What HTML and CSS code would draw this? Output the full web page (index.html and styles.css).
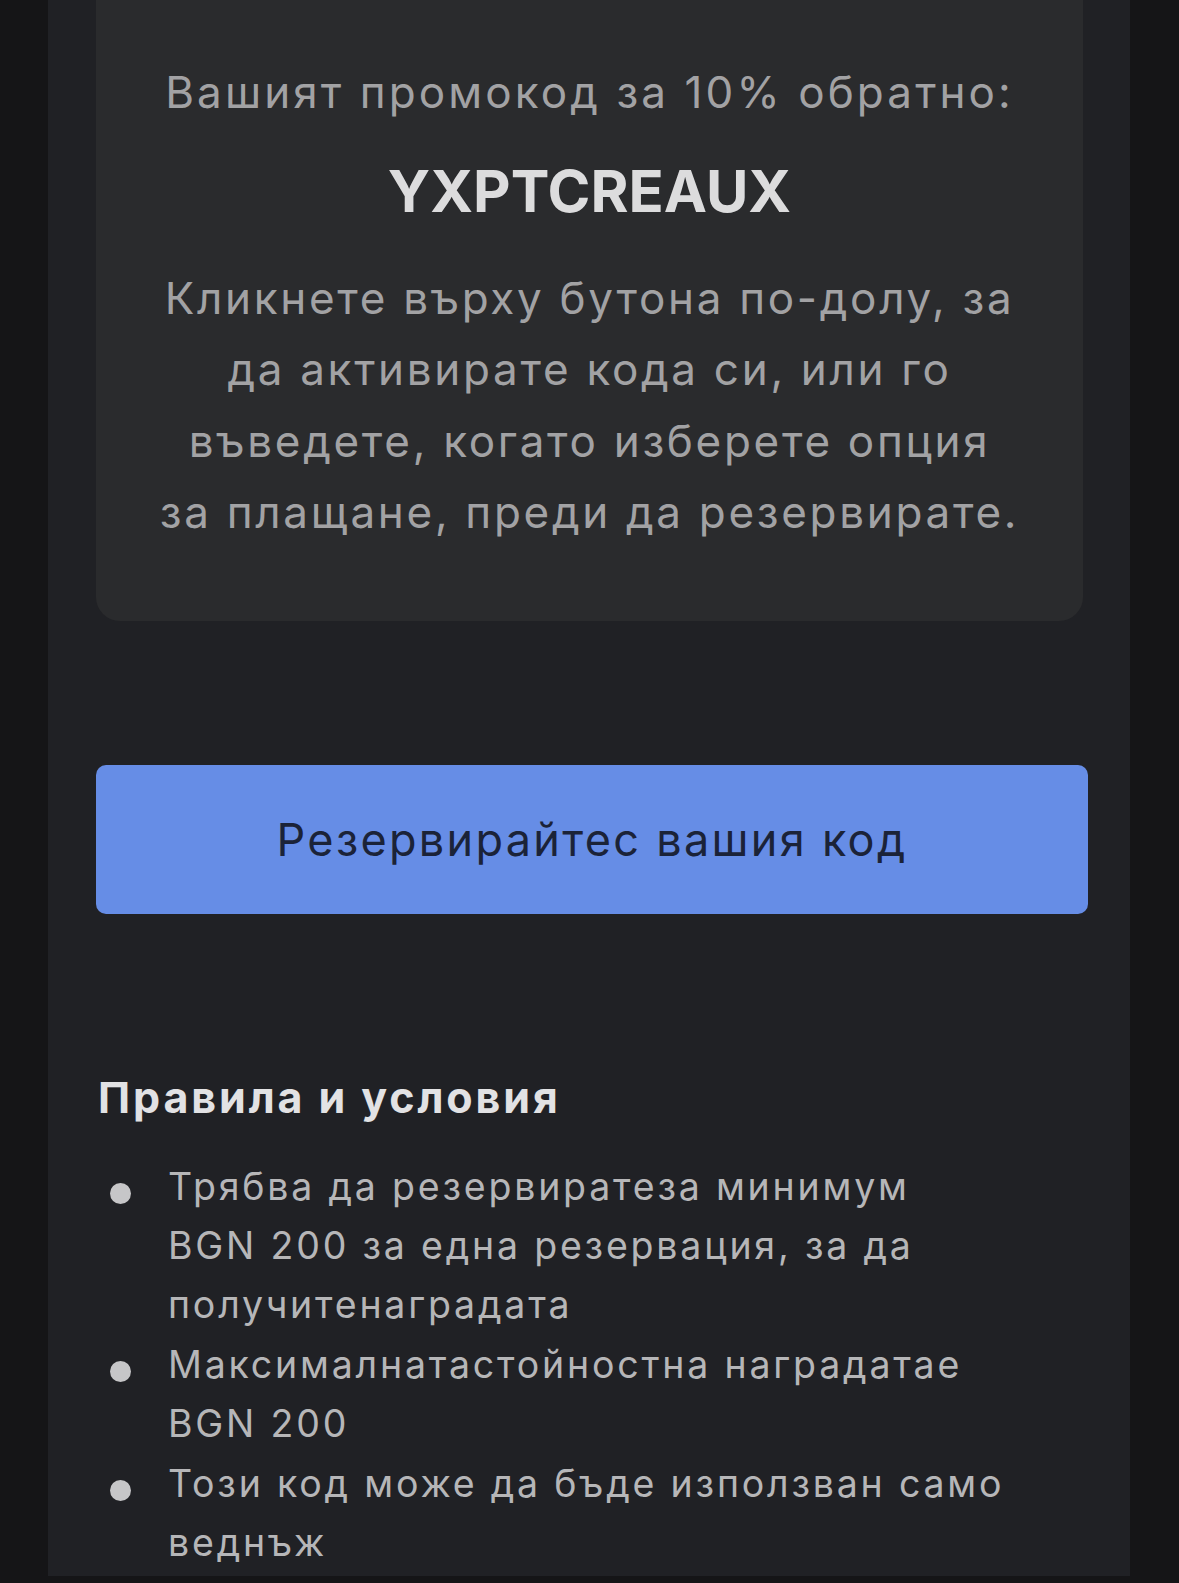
FILE: index.html
```html
<!DOCTYPE html>
<html lang="bg">
<head>
<meta charset="utf-8">
<title>Промокод</title>
<link rel="stylesheet" href="styles.css">
</head>
<body>
<main class="page">
  <section class="promo-card">
    <p class="promo-label">Вашият промокод за 10% обратно:</p>
    <p class="promo-code">YXPTCREAUX</p>
    <p class="promo-text">Кликнете върху бутона по-долу, за<br>да активирате кода си, или го<br>въведете, когато изберете опция<br>за плащане, преди да резервирате.</p>
  </section>

  <a class="book-btn" href="#">Резервирайтес вашия код</a>

  <section class="terms">
    <h2 class="terms-title">Правила и условия</h2>
    <ul class="terms-list">
      <li class="terms-item"><span class="bullet"></span><span class="item-text">Трябва да резервиратеза минимум<br>BGN 200 за една резервация, за да<br>получитенаградата</span></li>
      <li class="terms-item"><span class="bullet"></span><span class="item-text">Максималнатастойностна наградатае<br>BGN 200</span></li>
      <li class="terms-item"><span class="bullet"></span><span class="item-text">Този код може да бъде използван само<br>веднъж</span></li>
    </ul>
  </section>
</main>
</body>
</html>
```
FILE: styles.css
```css
html, body {
  margin: 0;
  padding: 0;
}

body {
  background: #151517;
  font-family: Inter, "Noto Sans", sans-serif;
  height: 1583px;
  overflow: hidden;
}

.page {
  margin-left: 48px;
  width: 1082px;
  box-sizing: border-box;
  background: #202125;
  padding: 0 0 4px 48px;
}

.promo-card {
  width: 987px;
  box-sizing: border-box;
  background: #2a2b2d;
  border-radius: 0 0 24px 24px;
  padding: 57px 20px 72px;
  text-align: center;
}

.promo-label {
  margin: 0 0 27px;
  font-size: 44px;
  line-height: 71.5px;
  letter-spacing: 3.1px;
  color: #a2a2a4;
  white-space: nowrap;
}

.promo-code {
  margin: 0 0 37px;
  font-size: 58px;
  line-height: 70px;
  font-weight: 700;
  color: #dcdcdd;
}

.promo-text {
  margin: 0;
  font-size: 44px;
  line-height: 71.5px;
  letter-spacing: 2.7px;
  color: #a2a2a4;
  white-space: nowrap;
}

.book-btn {
  display: flex;
  align-items: center;
  justify-content: center;
  margin-top: 144px;
  width: 992px;
  height: 149px;
  background: #668de6;
  border-radius: 10px;
  color: #1b2338;
  font-size: 45px;
  letter-spacing: 2.3px;
  text-decoration: none;
}

.terms {
  padding-top: 155px;
}

.terms-title {
  margin: 0 0 32px 2px;
  font-size: 43px;
  line-height: 56px;
  font-weight: 700;
  letter-spacing: 2.9px;
  color: #e2e2e4;
}

.terms-list {
  list-style: none;
  margin: 0;
  padding: 0;
}

.terms-item {
  display: flex;
  align-items: flex-start;
  font-size: 37.5px;
  line-height: 59.4px;
  letter-spacing: 2.8px;
  color: #b6b6b8;
}

.bullet {
  flex: none;
  width: 21px;
  height: 21px;
  border-radius: 50%;
  background: #c6c6c8;
  margin: 26px 37px 0 14px;
}

.item-text {
  white-space: nowrap;
}
```
